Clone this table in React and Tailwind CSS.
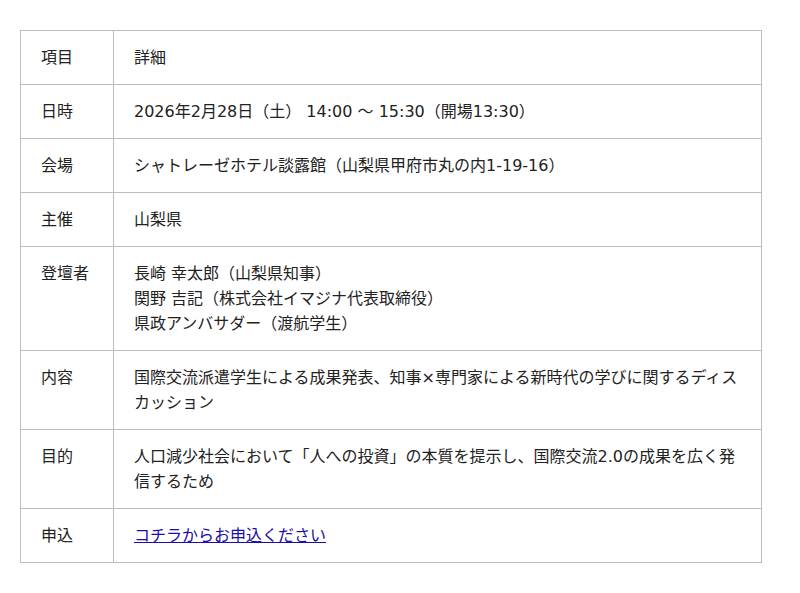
import React from 'react';

const rows = [
    { label: '項目', value: ['詳細'] },
    { label: '日時', value: ['2026年2月28日（土） 14:00 ～ 15:30（開場13:30）'] },
    { label: '会場', value: ['シャトレーゼホテル談露館（山梨県甲府市丸の内1-19-16）'] },
    { label: '主催', value: ['山梨県'] },
    {
        label: '登壇者',
        value: [
            '長崎 幸太郎（山梨県知事）',
            '関野 吉記（株式会社イマジナ代表取締役）',
            '県政アンバサダー（渡航学生）',
        ],
    },
    { label: '内容', value: ['国際交流派遣学生による成果発表、知事×専門家による新時代の学びに関するディスカッション'] },
    { label: '目的', value: ['人口減少社会において「人への投資」の本質を提示し、国際交流2.0の成果を広く発信するため'] },
];

const App = () => {
    return (
        <div
            className="min-h-screen bg-white pt-[30px] px-[20px] text-[16px] leading-[25px] text-[#222]"
            style={{ fontFamily: '"DejaVu Sans", "Noto Sans CJK JP", sans-serif' }}
        >
            <table className="w-[742px] border-collapse border border-[#dcdcdc]">
                <tbody>
                    {rows.map((row) => (
                        <tr key={row.label}>
                            <td className="w-[93px] border border-[#bdbdbd] px-[20px] py-[14px] align-top font-normal">
                                {row.label}
                            </td>
                            <td className="border border-[#bdbdbd] px-[20px] py-[14px] align-top">
                                {row.value.map((line) => (
                                    <div key={line}>{line}</div>
                                ))}
                            </td>
                        </tr>
                    ))}
                    <tr>
                        <td className="w-[93px] border border-[#bdbdbd] px-[20px] py-[14px] align-top">申込</td>
                        <td className="border border-[#bdbdbd] px-[20px] py-[14px] align-top">
                            <a href="#" className="text-[#1a0dab] underline">
                                コチラからお申込ください
                            </a>
                        </td>
                    </tr>
                </tbody>
            </table>
        </div>
    );
};

export default App;
